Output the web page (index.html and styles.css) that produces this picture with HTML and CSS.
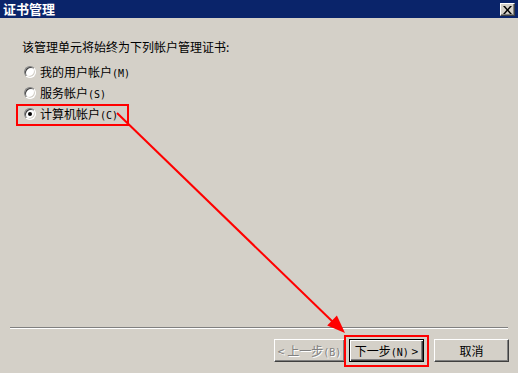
FILE: index.html
```html
<!DOCTYPE html>
<html lang="zh-CN">
<head>
<meta charset="utf-8">
<title>证书管理</title>
<link rel="stylesheet" href="styles.css">
</head>
<body>
<div class="dialog">
  <div class="titlebar">
    <span class="title">证书管理</span>
    <span class="close">
      <svg width="9" height="8" viewBox="0 0 9 8"><path d="M0 0h2l2.5 3 2.5-3h2L5.5 4 9 8H7L4.5 5 2 8H0l3.5-4z" fill="#000"/></svg>
    </span>
  </div>
  <div class="body">
    <p class="intro">该管理单元将始终为下列帐户管理证书:</p>
    <ul class="options">
      <li class="option"><span class="radio"></span><span class="label">我的用户帐户<span class="key">(M)</span></span></li>
      <li class="option"><span class="radio"></span><span class="label">服务帐户<span class="key">(S)</span></span></li>
      <li class="option"><span class="radio checked"></span><span class="label">计算机帐户<span class="key">(C)</span></span></li>
    </ul>
  </div>
  <div class="footer">
    <div class="sep"></div>
    <div class="buttons">
      <button class="btn disabled">&lt; 上一步<span class="key">(B)</span></button>
      <button class="btn default">下一步<span class="key">(N)</span> &gt;</button>
      <button class="btn cancel">取消</button>
    </div>
  </div>
</div>
<div class="mark mark-radio"></div>
<div class="mark mark-next"></div>
<svg class="arrow" width="518" height="373" viewBox="0 0 518 373">
  <line x1="117" y1="113" x2="334" y2="323" stroke="#ff0000" stroke-width="2"/>
  <polygon points="345,333 327.2,325.5 336.9,315.5" fill="#ff0000"/>
</svg>
</body>
</html>
```

FILE: styles.css
```css
html, body {
  margin: 0;
  padding: 0;
}
body {
  width: 518px;
  height: 373px;
  overflow: hidden;
  background: #d4d0c8;
  font-family: "Noto Sans CJK SC", "Liberation Sans", sans-serif;
  font-size: 12px;
  color: #000;
  position: relative;
}
.dialog {
  display: flex;
  flex-direction: column;
  height: 373px;
}
.titlebar {
  height: 18px;
  background: #0a246a;
  display: flex;
  align-items: center;
  justify-content: space-between;
  padding: 0 3px 0 3px;
  flex: none;
}
.title {
  color: #fff;
  font-weight: bold;
  font-size: 13px;
  line-height: 18px;
}
.close {
  width: 15px;
  height: 13px;
  box-sizing: border-box;
  background: #d4d0c8;
  border-top: 1px solid #fff;
  border-left: 1px solid #fff;
  border-right: 1px solid #404040;
  border-bottom: 1px solid #404040;
  box-shadow: inset -1px -1px 0 #808080;
  display: flex;
  align-items: center;
  justify-content: center;
  margin-top: 1px;
}
.body {
  flex: 1;
  padding: 22px 0 0 22px;
}
.intro {
  margin: 0;
  line-height: 14px;
}
.options {
  list-style: none;
  margin: 11px 0 0 2px;
  padding: 0;
  display: flex;
  flex-direction: column;
  gap: 7px;
}
.option {
  display: flex;
  align-items: center;
  gap: 4px;
  height: 14px;
  line-height: 14px;
}
.label {
  height: 14px;
  line-height: 14px;
  white-space: nowrap;
}
.key {
  font-family: "DejaVu Sans Mono", monospace;
  font-size: 10px;
  line-height: 14px;
}
.radio {
  width: 12px;
  height: 12px;
  box-sizing: border-box;
  border-radius: 50%;
  background: #fff;
  border: 1px solid;
  border-color: #808080 #fff #fff #808080;
  box-shadow: inset 1px 1px 0 #404040, inset -1px -1px 0 #d4d0c8;
  position: relative;
  flex: none;
}
.radio.checked::after {
  content: "";
  position: absolute;
  left: 3px;
  top: 3px;
  width: 4px;
  height: 4px;
  border-radius: 50%;
  background: #000;
}
.footer {
  flex: none;
  height: 46px;
}
.sep {
  margin: 0 10px;
  border-top: 1px solid #808080;
  border-bottom: 1px solid #fff;
  height: 0;
}
.buttons {
  display: flex;
  justify-content: flex-end;
  padding: 10px 9px 0 0;
}
.btn {
  font-family: "Noto Sans CJK SC", "Liberation Sans", sans-serif;
  font-size: 12px;
  height: 23px;
  width: 75px;
  padding: 0;
  background: #d4d0c8;
  box-sizing: border-box;
  border: 1px solid;
  border-color: #fff #404040 #404040 #fff;
  box-shadow: inset -1px -1px 0 #808080;
  color: #000;
  line-height: 19px;
}
.btn.disabled {
  width: 71px;
  color: #808080;
  text-shadow: 1px 1px 0 #fff;
  margin-right: 4px;
}
.btn.default {
  border: 1px solid #000;
  box-shadow: inset 1px 1px 0 #fff, inset -1px -1px 0 #404040, inset -2px -2px 0 #808080;
  margin-right: 10px;
}
.mark {
  position: absolute;
  border: 2px solid #ff0000;
  box-sizing: border-box;
}
.mark-radio {
  left: 16px;
  top: 104px;
  width: 113px;
  height: 22px;
}
.mark-next {
  left: 344px;
  top: 335px;
  width: 85px;
  height: 32px;
}
.arrow {
  position: absolute;
  left: 0;
  top: 0;
  pointer-events: none;
}
```
